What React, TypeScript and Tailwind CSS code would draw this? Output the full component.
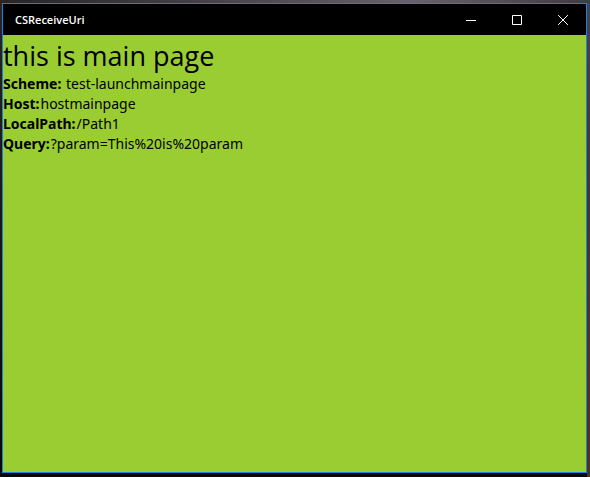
import React from "react";

const details = [
  { label: "Scheme:", value: " test-launchmainpage" },
  { label: "Host:", value: "hostmainpage" },
  { label: "LocalPath:", value: "/Path1" },
  { label: "Query:", value: "?param=This%20is%20param" },
];

const captionButtons = [
  { name: "Minimize", path: "M0 5.5H10" },
  { name: "Maximize", path: "M0.5 0.5H9.5V9.5H0.5Z" },
  { name: "Close", path: "M0.1 0.1L9.9 9.9M9.9 0.1L0.1 9.9" },
];

function TitleBar() {
  return (
    <header className="flex h-[31px] items-center justify-between bg-black text-white">
      <h1 className="pl-3 text-[11px] leading-4 font-semibold">CSReceiveUri</h1>
      <div className="flex h-full">
        {captionButtons.map(({ name, path }) => (
          <button
            key={name}
            type="button"
            aria-label={name}
            className="flex w-[46px] items-center justify-center"
          >
            <svg width="10" height="10" viewBox="0 0 10 10" fill="none" stroke="currentColor">
              <path d={path} />
            </svg>
          </button>
        ))}
      </div>
    </header>
  );
}

function Desktop({ children }: { children: React.ReactNode }) {
  return (
    <div className="flex min-h-screen bg-linear-to-r from-[#24262a] from-0% via-[#66616e] via-70% to-[#3e3c44] pt-[3px]">
      <div className="flex flex-1 bg-linear-to-b from-[#45434c] from-0% via-[#3d3835] via-40% to-[#54301f] to-85% pr-[3px]">
        <div className="flex flex-1 bg-linear-to-b from-[#24262a] to-[#08080a] pb-1 pl-0.5">
          {children}
        </div>
      </div>
    </div>
  );
}

export default function App() {
  return (
    <Desktop>
      <div className="flex flex-1 flex-col border border-[#1a82dc] font-['Open_Sans','Noto_Sans',sans-serif]">
        <TitleBar />
        <main className="flex-1 bg-[#9acd32] text-black">
          <h2 className="pt-0.5 text-[27px] leading-[37px]">this is main page</h2>
          {details.map(({ label, value }) => (
            <p key={label} className="font-['Noto_Sans',sans-serif] text-sm leading-5">
              <strong className="mr-px font-bold">{label}</strong>
              {value}
            </p>
          ))}
        </main>
      </div>
    </Desktop>
  );
}
